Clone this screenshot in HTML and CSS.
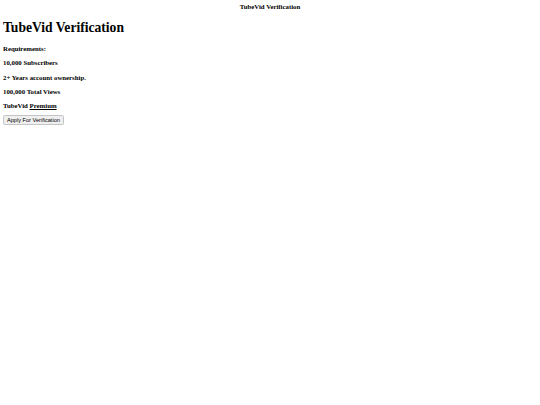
FILE: index.html
```html
<!DOCTYPE html>
<html>
<head>
<meta charset="utf-8">
<link rel="stylesheet" href="styles.css">
</head>
<body>
<div class="page">
  <div class="topbar">TubeVid Verification</div>
  <h1 class="title">TubeVid Verification</h1>
  <div class="req">Requirements:</div>
  <div class="req">10,000 Subscribers</div>
  <div class="req">2+ Years account ownership.</div>
  <div class="req">100,000 Total Views</div>
  <div class="req">TubeVid <span class="link">Premium</span></div>
  <div class="actions"><button class="btn">Apply For Verification</button></div>
</div>
</body>
</html>
```
FILE: styles.css
```css
html, body {
  margin: 0;
  padding: 0;
  background: #ffffff;
}
.page {
  padding: 3px 3px 0 3px;
  font-family: "Liberation Serif", "Times New Roman", serif;
  color: #000;
}
.topbar {
  text-align: center;
  font-weight: bold;
  font-size: 6.8px;
  line-height: 8px;
}
.title {
  margin: 9px 0 0 0;
  font-size: 13.6px;
  line-height: 16px;
  font-weight: bold;
}
.req {
  font-weight: bold;
  font-size: 6.8px;
  line-height: 8px;
  margin-top: 6.3px;
}
.title + .req {
  margin-top: 9px;
}
.link {
  text-decoration: underline;
}
.actions {
  margin-top: 4.5px;
  line-height: 0;
}
.btn {
  font-family: "Liberation Sans", Arial, sans-serif;
  font-size: 5.6px;
  line-height: 6px;
  padding: 1px 3px 1px 3px;
  margin: 0;
  background: #efefef;
  border: 1px solid #c4c4c4;
  border-radius: 1.5px;
  color: #000;
}
```
